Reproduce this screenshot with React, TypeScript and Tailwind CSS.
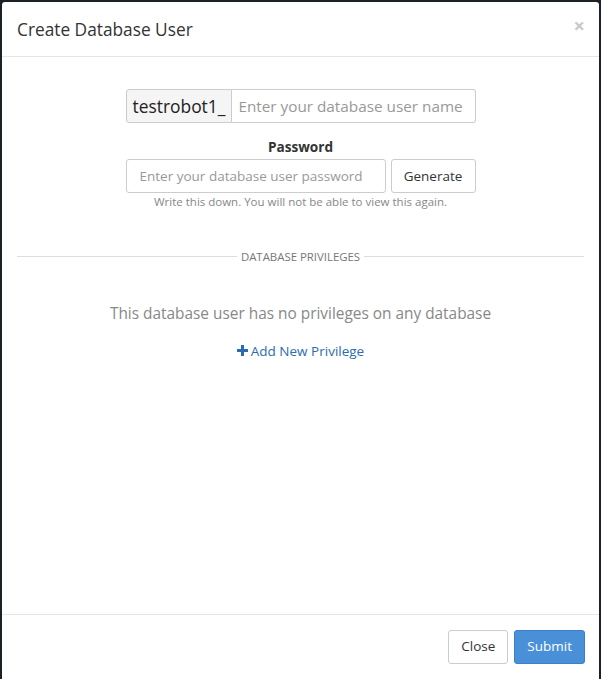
import React from 'react';

export default function App() {
  return (
    <div className="h-[679px] w-[601px] overflow-hidden bg-[#1b2227] pl-[2px] pr-[2px] pt-[2px]" style={{ fontFamily: '"Open Sans", "Noto Sans", sans-serif' }}>
      <div className="flex h-full flex-col rounded-t-[3px] bg-white">
        <div className="flex h-[55px] items-center justify-between border-b border-[#e5e5e5] pl-[15px] pr-[14px]">
          <h4 className="mt-[1px] text-[17.3px] text-[#333]">Create Database User</h4>
          <button className="-mt-[6px] text-[20px] font-bold leading-none text-[#c8c8c8]">×</button>
        </div>

        <div className="flex-1 px-[15px] pt-[32px]">
          <div className="flex justify-center">
            <div className="flex w-[350px]">
              <span className="flex h-[34px] items-center rounded-l-[3px] border border-[#ccc] bg-[#f5f5f5] px-[6px] text-[17.4px] text-[#222]">testrobot1_</span>
              <input className="h-[34px] min-w-0 flex-1 rounded-r-[3px] border border-l-0 border-[#ccc] px-[6px] text-[15.3px] placeholder-[#999] outline-none" placeholder="Enter your database user name" />
            </div>
          </div>

          <div className="mt-[14px] text-center text-[13.6px] font-bold text-[#333]">Password</div>
          <div className="mt-[2px] flex justify-center">
            <div className="flex w-[350px] gap-[5px]">
              <input className="h-[34px] w-[260px] rounded-[3px] border border-[#ccc] px-[13px] text-[13.5px] placeholder-[#999] outline-none" placeholder="Enter your database user password" />
              <button className="h-[34px] flex-1 rounded-[3px] border border-[#ccc] bg-white text-[13.5px] text-[#333]">Generate</button>
            </div>
          </div>
          <p className="text-center text-[11.5px] text-[#888]">Write this down. You will not be able to view this again.</p>

          <div className="mt-[37px] flex items-center">
            <div className="h-px flex-1 bg-[#ddd]" />
            <span className="px-[4px] text-[11.4px] uppercase text-[#777]">Database Privileges</span>
            <div className="h-px flex-1 bg-[#ddd]" />
          </div>

          <p className="mt-[37px] text-center text-[15.4px] text-[#888]">This database user has no privileges on any database</p>
          <div className="mt-[16px] flex justify-center">
            <a className="flex items-center gap-[3px] text-[13.5px] text-[#2b6cb0]" href="#">
              <svg width="11" height="11" viewBox="0 0 11 11"><path d="M4 0h3v4h4v3H7v4H4V7H0V4h4z" fill="#2b6cb0" /></svg>
              Add New Privilege
            </a>
          </div>
        </div>

        <div className="flex h-[65px] items-center justify-end gap-[6px] border-t border-[#e5e5e5] px-[14px] pb-[1px]">
          <button className="h-[34px] rounded-[3px] border border-[#ccc] bg-white px-[12px] text-[13.5px] text-[#333]">Close</button>
          <button className="h-[34px] rounded-[3px] border border-[#3a80c9] bg-[#4a90d9] px-[12px] text-[13.5px] text-white">Submit</button>
        </div>
      </div>
    </div>
  );
}
